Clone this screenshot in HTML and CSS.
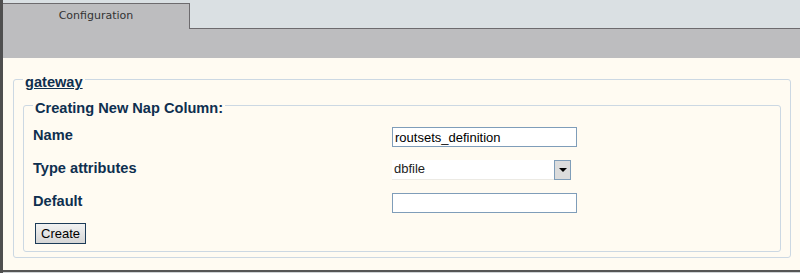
FILE: index.html
```html
<!DOCTYPE html>
<html lang="en">
<head>
    <meta charset="UTF-8">
    <title>Configuration</title>
    <link rel="stylesheet" href="styles.css">
</head>
<body>
    <div class="frame">
        <div class="tabs">
            <div class="tab">Configuration</div>
            <div class="tab-fill"></div>
        </div>
        <div class="band"></div>
        <div class="content">
            <fieldset class="outer">
                <legend><a href="#">gateway</a></legend>
                <fieldset class="inner">
                    <legend>Creating New Nap Column:</legend>
                    <div class="form-grid">
                        <label for="name">Name</label>
                        <input type="text" id="name" value="routsets_definition">

                        <label>Type attributes</label>
                        <div class="select">
                            <span class="select-value">dbfile</span>
                            <span class="select-btn"></span>
                        </div>

                        <label for="default">Default</label>
                        <input type="text" id="default">
                    </div>
                    <button class="create">Create</button>
                </fieldset>
            </fieldset>
        </div>
        <div class="bottom"></div>
    </div>
</body>
</html>
```

FILE: styles.css
```css
html, body {
    margin: 0;
    padding: 0;
}

body {
    font-family: "Liberation Sans", Arial, sans-serif;
    background: #cfd3d6;
}

.frame {
    border-left: 3px solid #4f4f4f;
    height: 273px;
    box-sizing: border-box;
}

.tabs {
    display: flex;
    height: 29px;
    background: #dae0e3;
}

.tab {
    width: 186px;
    margin-top: 3px;
    height: 25px;
    background: #bdbdbf;
    border-top: 1px solid #6d6b6e;
    border-right: 1px solid #6d6b6e;
    color: #333;
    font-family: "DejaVu Sans", sans-serif;
    font-size: 11px;
    text-align: center;
    line-height: 23px;
}

.tab-fill {
    flex: 1;
    border-bottom: 1px solid #6d6b6e;
}

.band {
    height: 29px;
    background: #bdbdbf;
}

.content {
    height: 212px;
    background: #fffbf2;
    padding: 10px 9px 0 10px;
    box-sizing: border-box;
}

.bottom {
    height: 1px;
    border-top: 2px solid #555;
    background: #cfd3d6;
}

fieldset {
    margin: 0;
    border: 1px solid #ccd8e3;
    border-radius: 3px;
}

legend {
    padding: 6px 2px 0;
    line-height: 16px;
    font-size: 14.6px;
    font-weight: bold;
    color: #0e2f4f;
}

.outer {
    padding: 0 9px 5px 9px;
}

.outer legend a {
    color: #0e2f4f;
}

.inner {
    margin-top: 4px;
    padding: 11px 9px 7px 9px;
}

.form-grid {
    display: grid;
    grid-template-columns: 359px 186px;
    grid-auto-rows: 33px;
    align-items: start;
}

.form-grid label {
    font-size: 14.6px;
    font-weight: bold;
    color: #0e2f4f;
    line-height: 16px;
}

.form-grid input {
    width: 185px;
    height: 20px;
    box-sizing: border-box;
    border: 1px solid #7f9db9;
    padding: 0 2px;
    font-family: "Liberation Sans", Arial, sans-serif;
    font-size: 13px;
    color: #000;
    background: #fff;
}

.select {
    display: flex;
    width: 179px;
    height: 20px;
}

.select-value {
    flex: 1;
    background: #fff;
    font-size: 13px;
    line-height: 18px;
    padding-left: 2px;
    color: #222;
    border-bottom: 1px solid #eceae4;
}

.select-btn {
    width: 15px;
    height: 18px;
    border: 1px solid #7f9db9;
    background: #dcdcdc;
    position: relative;
}

.select-btn::after {
    content: "";
    position: absolute;
    left: 4px;
    top: 7px;
    border-left: 4px solid transparent;
    border-right: 4px solid transparent;
    border-top: 4px solid #000;
}

.create {
    display: block;
    margin-top: -3px;
    margin-left: 2px;
    height: 21px;
    padding: 0 5px;
    border: 1px solid #1c3b58;
    background: linear-gradient(#f2f2f2, #d6d6d6);
    font-family: "Liberation Sans", Arial, sans-serif;
    font-size: 13px;
    color: #000;
}
```
